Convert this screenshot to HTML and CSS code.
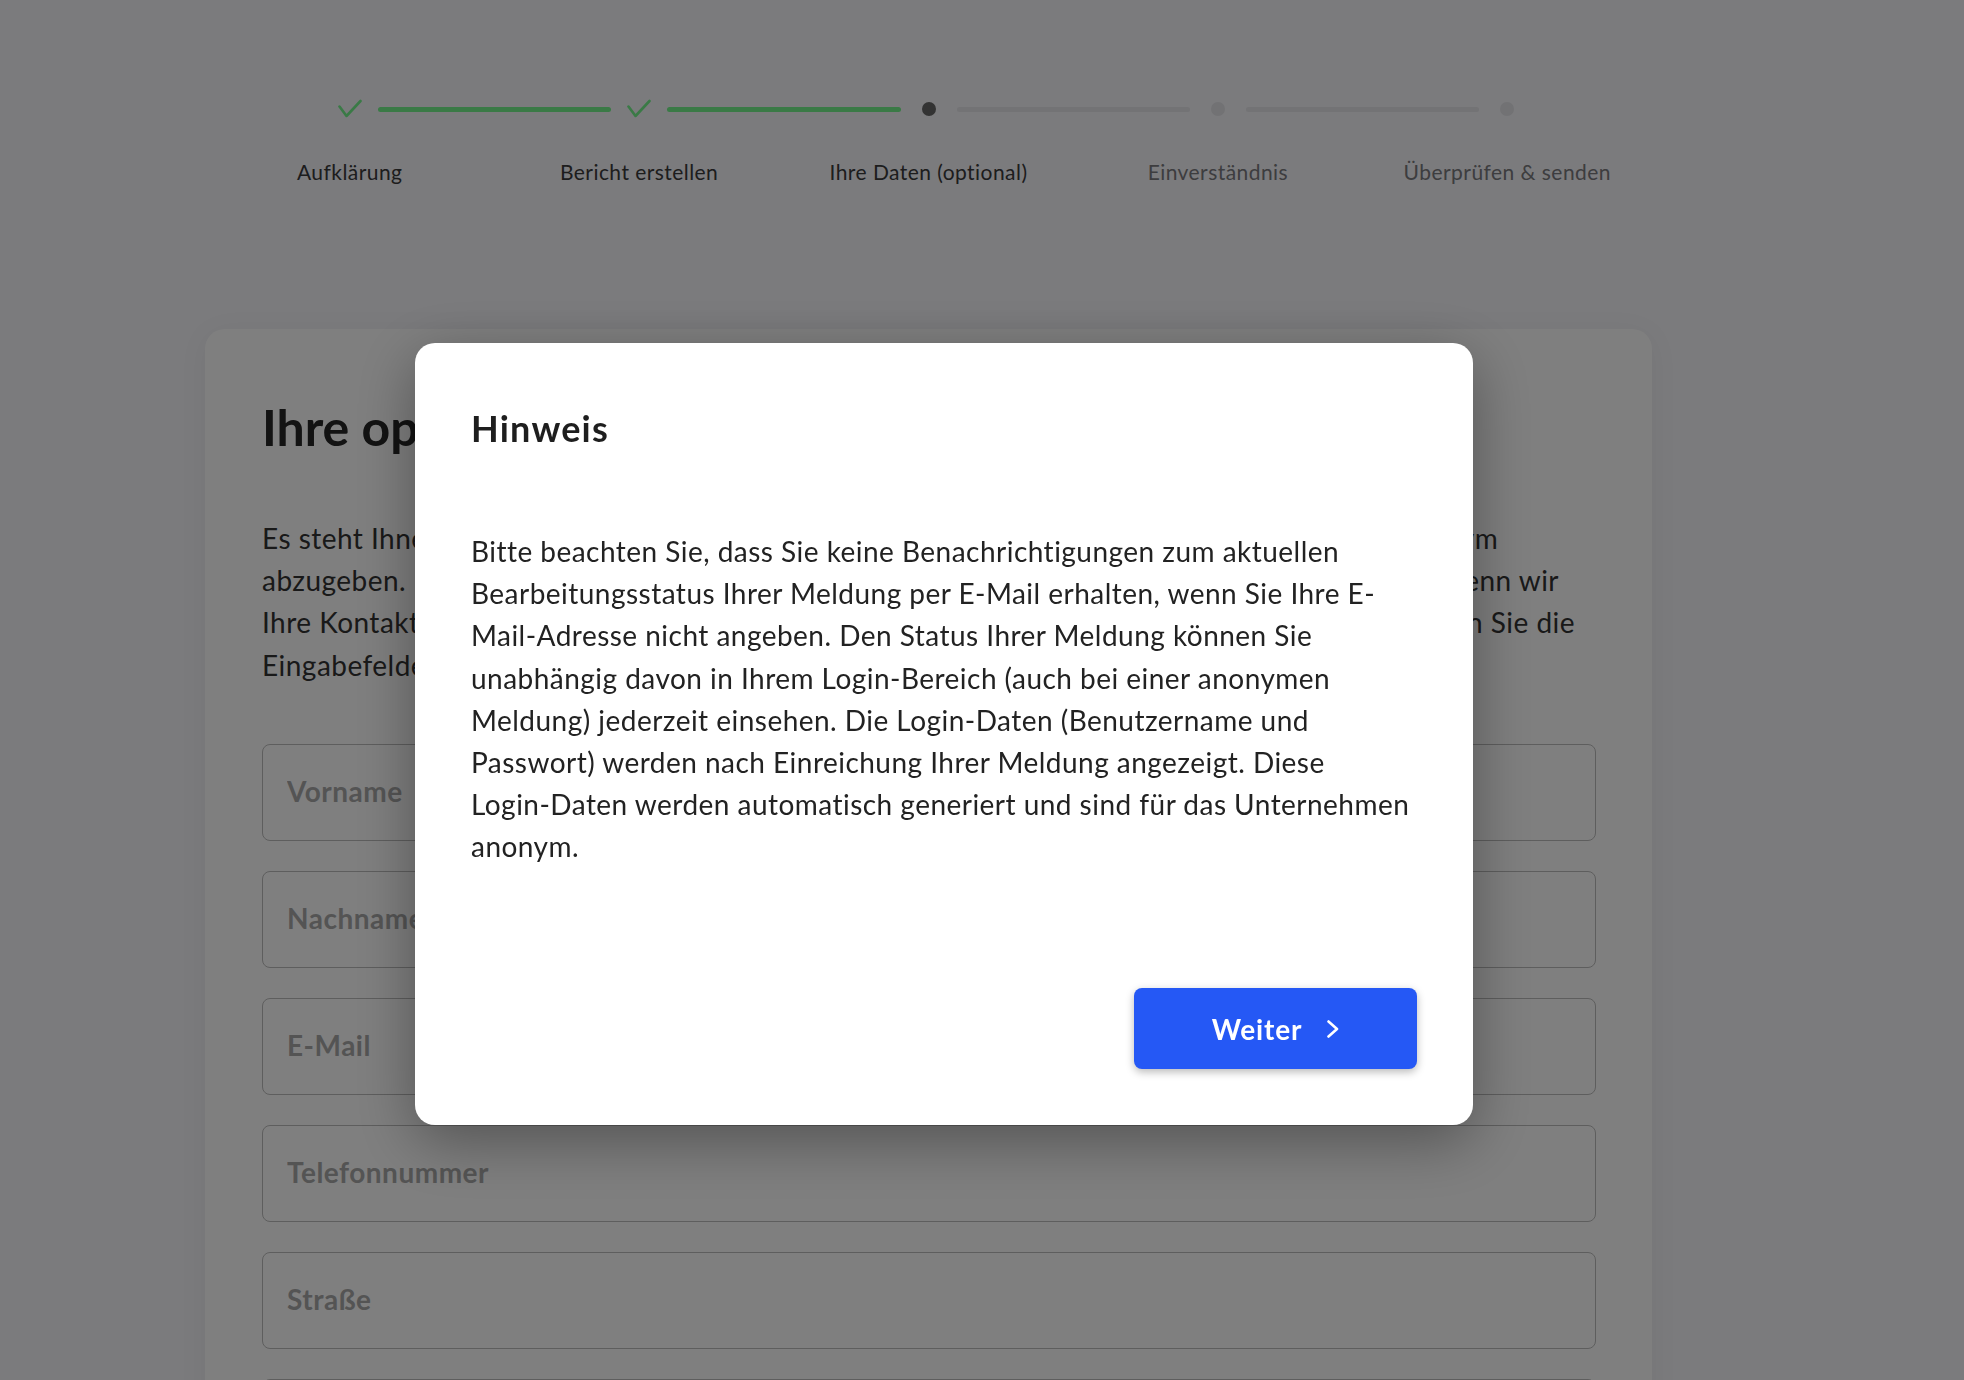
FILE: index.html
```html
<!DOCTYPE html>
<html lang="de">
<head>
<meta charset="utf-8">
<title>Ihre Daten (optional)</title>
<link rel="stylesheet" href="styles.css">
</head>
<body>
<div class="page">
  <nav class="stepper" aria-label="Fortschritt">
    <div class="track">
      <span class="marker done"><svg viewBox="0 0 24 24" width="24" height="24"><path d="M1.5 9.5 L8.5 19 L22.5 4" /></svg></span>
      <span class="bar done"></span>
      <span class="marker done"><svg viewBox="0 0 24 24" width="24" height="24"><path d="M1.5 9.5 L8.5 19 L22.5 4" /></svg></span>
      <span class="bar done"></span>
      <span class="marker current"><span class="dot"></span></span>
      <span class="bar"></span>
      <span class="marker"><span class="dot"></span></span>
      <span class="bar"></span>
      <span class="marker"><span class="dot"></span></span>
    </div>
    <ol class="labels">
      <li class="reached">Aufklärung</li>
      <li class="reached">Bericht erstellen</li>
      <li class="reached">Ihre Daten (optional)</li>
      <li>Einverständnis</li>
      <li>Überprüfen &amp; senden</li>
    </ol>
  </nav>

  <main class="card">
    <h1 class="card-title">Ihre optionalen Daten</h1>
    <p class="card-text">Es steht Ihnen jederzeit frei, Ihre Meldung mit Angabe von Kontaktdaten oder vollständig anonym abzugeben. Die Eingabe Ihrer Daten ist freiwillig, vereinfacht uns jedoch die Kommunikation, wenn wir Ihre Kontaktdaten für eventuelle Rückfragen benötigen. Wollen Sie anonym bleiben, dann lassen Sie die Eingabefelder einfach leer.</p>
    <form class="fields">
      <input class="field" type="text" placeholder="Vorname">
      <input class="field" type="text" placeholder="Nachname">
      <input class="field" type="email" placeholder="E-Mail">
      <input class="field" type="tel" placeholder="Telefonnummer">
      <input class="field" type="text" placeholder="Straße">
      <input class="field" type="text" placeholder="Hausnummer">
    </form>
  </main>
</div>

<div class="overlay">
  <div class="modal" role="dialog" aria-labelledby="modal-title">
    <h2 class="modal-title" id="modal-title">Hinweis</h2>
    <p class="modal-text">Bitte beachten Sie, dass Sie keine Benachrichtigungen zum aktuellen<br>
    Bearbeitungsstatus Ihrer Meldung per E-Mail erhalten, wenn Sie Ihre E-<br>
    Mail-Adresse nicht angeben. Den Status Ihrer Meldung können Sie<br>
    unabhängig davon in Ihrem Login-Bereich (auch bei einer anonymen<br>
    Meldung) jederzeit einsehen. Die Login-Daten (Benutzername und<br>
    Passwort) werden nach Einreichung Ihrer Meldung angezeigt. Diese<br>
    Login-Daten werden automatisch generiert und sind für das Unternehmen<br>
    anonym.</p>
    <div class="modal-actions">
      <button class="btn-primary" type="button">Weiter
        <svg viewBox="0 0 12 18" width="12" height="18"><path d="M1.5 1.5 L10 9 L1.5 16.5" /></svg>
      </button>
    </div>
  </div>
</div>
</body>
</html>
```

FILE: styles.css
```css
* {
  box-sizing: border-box;
}

html, body {
  margin: 0;
  padding: 0;
}

body {
  background: #f6f6fa;
  font-family: Lato, "Noto Sans", "Liberation Sans", sans-serif;
  color: #2a2a2a;
  height: 1380px;
  overflow: hidden;
}

.page {
  width: 1447px;
  margin-left: 205px;
  padding-top: 97px;
}

/* Stepper */
.stepper {
  width: 100%;
}

.track {
  display: flex;
  align-items: center;
  padding: 0 117px;
  height: 24px;
}

.marker {
  flex: 0 0 56px;
  height: 24px;
  display: flex;
  align-items: center;
  justify-content: center;
}

.marker svg path {
  fill: none;
  stroke: #74f48c;
  stroke-width: 2.6;
  stroke-linecap: round;
  stroke-linejoin: round;
}

.marker .dot {
  width: 14px;
  height: 14px;
  border-radius: 50%;
  background: #e4e4e8;
}

.marker.current .dot {
  background: #666666;
}

.bar {
  flex: 1 1 auto;
  height: 5px;
  border-radius: 3px;
  background: #e6e6ea;
}

.bar.done {
  background: #74f48c;
}

.labels {
  list-style: none;
  margin: 35px 0 0;
  padding: 0;
  display: grid;
  grid-template-columns: repeat(5, 1fr);
}

.labels li {
  text-align: center;
  font-size: 21px;
  line-height: 31px;
  letter-spacing: 0.45px;
  color: #7a7a7e;
}

.labels li.reached {
  color: #3a3a3a;
}

/* Card */
.card {
  margin-top: 142px;
  background: #ffffff;
  border-radius: 20px;
  box-shadow: 0 4px 30px rgba(0, 0, 0, 0.05);
  padding: 68px 56px 0 57px;
  min-height: 1200px;
}

.card-title {
  margin: 0;
  font-size: 50px;
  line-height: 60px;
  font-weight: 700;
  color: #262626;
}

.card-text {
  margin: 60px 0 0;
  font-size: 28px;
  line-height: 42.2px;
  letter-spacing: 0.47px;
  color: #333333;
}

.fields {
  margin-top: 58px;
  display: flex;
  flex-direction: column;
  gap: 30px;
}

.field {
  display: block;
  width: 100%;
  height: 97px;
  border: 1px solid #bcbcbc;
  border-radius: 8px;
  padding: 0 24px 3px;
  font-family: inherit;
  font-size: 28px;
  font-weight: 700;
  letter-spacing: 0.5px;
  color: #333;
  background: #ffffff;
}

.field::placeholder {
  color: #a9a9a9;
}

/* Overlay + modal */
.overlay {
  position: fixed;
  inset: 0;
  background: rgba(0, 0, 0, 0.5);
  display: flex;
  align-items: flex-start;
  padding: 343px 0 0 415px;
}

.modal {
  width: 1058px;
  height: 782px;
  background: #ffffff;
  border-radius: 20px;
  padding: 56px;
  box-shadow: 0 16px 60px rgba(0, 0, 0, 0.35);
  display: flex;
  flex-direction: column;
}

.modal-title {
  margin: 8px 0 0;
  font-size: 36px;
  line-height: 43px;
  font-weight: 700;
  letter-spacing: 1.2px;
  color: #1e1e1e;
}

.modal-text {
  margin: 80px -30px 0 0;
  font-size: 28px;
  line-height: 42.2px;
  letter-spacing: 0.47px;
  color: #222222;
}

.modal-actions {
  margin-top: auto;
  display: flex;
  justify-content: flex-end;
}

.btn-primary {
  width: 283px;
  height: 81px;
  border: none;
  border-radius: 8px;
  background: #2558f5;
  color: #ffffff;
  font-family: inherit;
  font-size: 28px;
  font-weight: 700;
  letter-spacing: 0.8px;
  display: flex;
  align-items: center;
  justify-content: center;
  gap: 25px;
  box-shadow: 0 3px 8px rgba(0, 0, 0, 0.28);
  cursor: pointer;
}

.btn-primary svg path {
  fill: none;
  stroke: #ffffff;
  stroke-width: 2.6;
  stroke-linecap: round;
  stroke-linejoin: round;
}
```
